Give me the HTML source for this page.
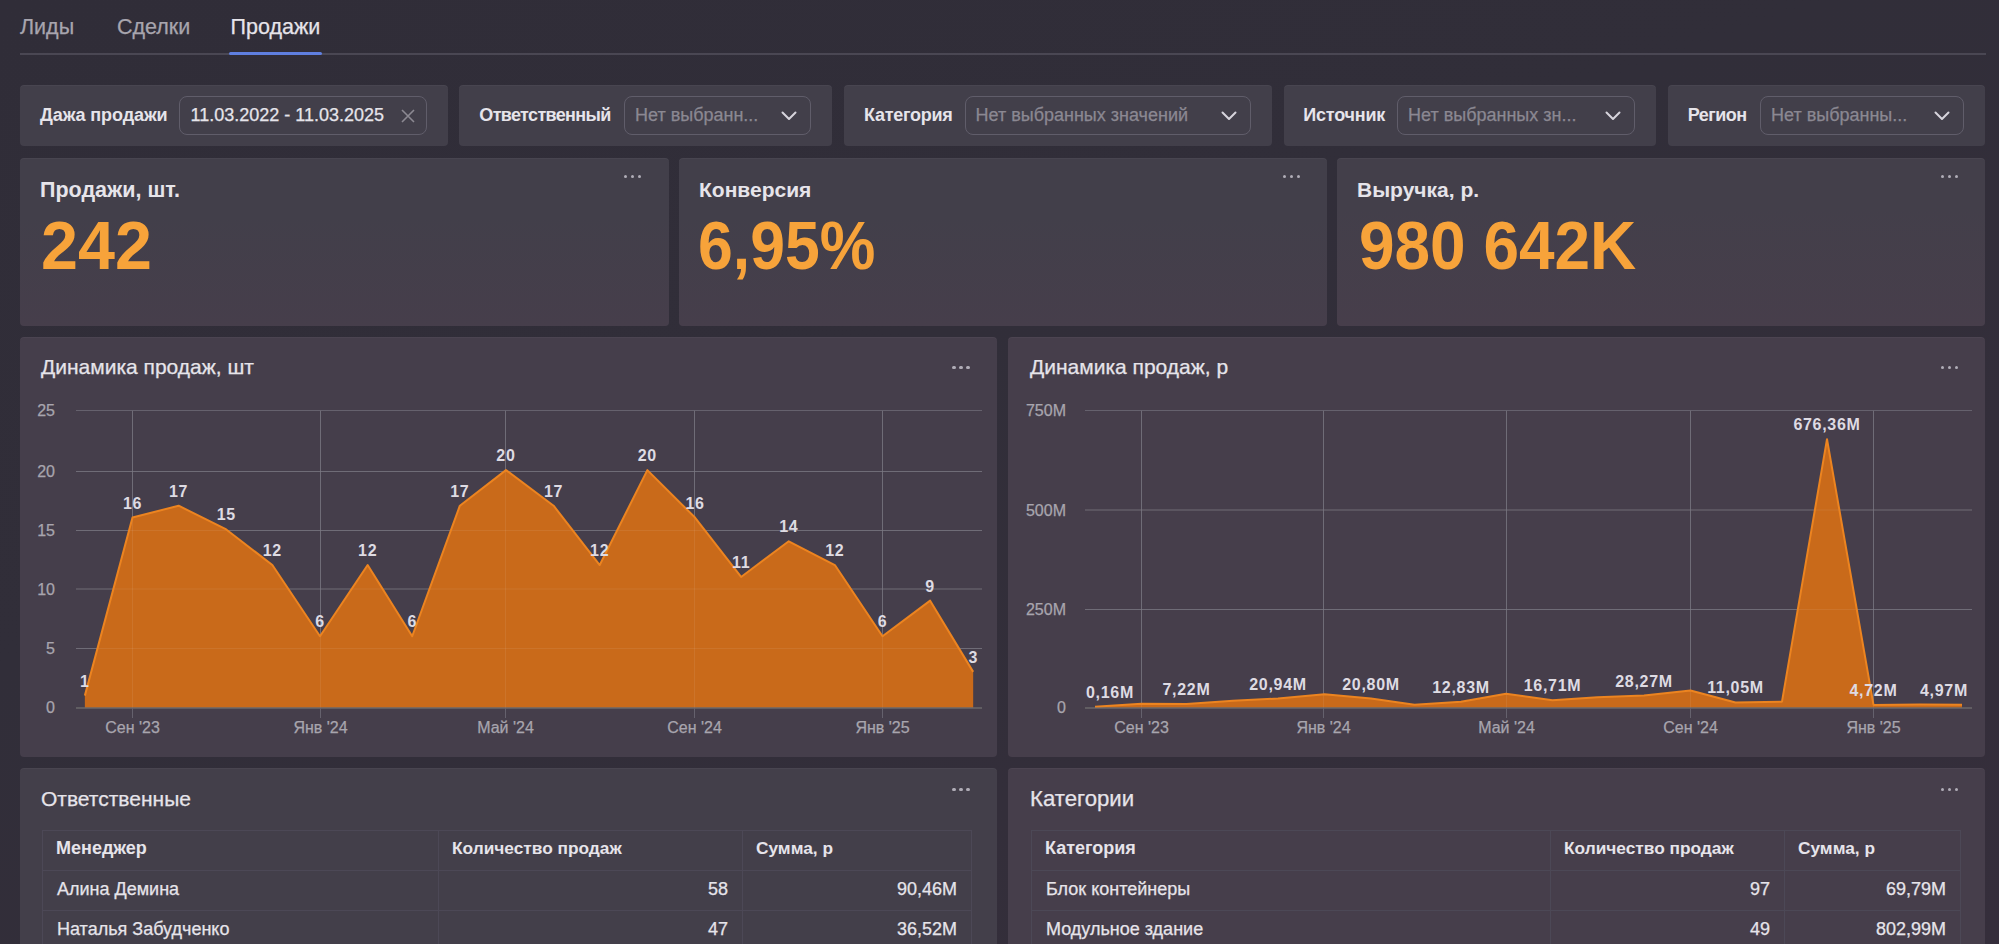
<!DOCTYPE html>
<html><head><meta charset="utf-8">
<style>
*{margin:0;padding:0;box-sizing:border-box}
html,body{width:1999px;height:944px;overflow:hidden;background:#312e39;}
body{background:linear-gradient(160deg,#302d38 0%,#312e39 40%,#352e3b 100%);font-family:"Liberation Sans",sans-serif;color:#e6e4ea}
body div,body td{-webkit-text-stroke:0.25px currentColor}
.flab,.kt,.kv{-webkit-text-stroke:0 !important}
.abs,.card,.flab,.inp,.fval,.fph,.dots,.t,.kv{position:absolute}
.card{background:#423f4a;border-radius:4px;box-shadow:inset 0 1px 0 rgba(255,255,255,0.035)}
.tab{position:absolute;top:13.5px;font-size:21.5px;line-height:26px;color:#a8a5ae}
.tab.on{color:#e6e4ea}
.flab{font-size:17.5px;font-weight:700;line-height:24px;color:#e6e4ea;white-space:nowrap}
.inp{border:1.5px solid #605d6a;border-radius:8px}
.fval{font-size:18px;line-height:24px;color:#e6e4ea;white-space:nowrap}
.fph{font-size:18px;line-height:24px;color:#8b8892;white-space:nowrap}
.dots{width:20px;height:6px}
.dots i{position:absolute;top:0.1px;width:3.8px;height:3.8px;border-radius:50%;background:#b0adb7}
.dots i:nth-child(1){left:0} .dots i:nth-child(2){left:7px} .dots i:nth-child(3){left:14px}
.t{white-space:nowrap}
.kt{font-size:21px;font-weight:700;line-height:26px}
.kv{font-size:68px;font-weight:700;line-height:80px;color:#f7a33a;white-space:nowrap;transform-origin:0 0}
.ct{font-size:21px;line-height:26px}
svg.ch{position:absolute;left:0;top:0}
.g{stroke:#65616d;stroke-width:1}
.af{fill:#c96a1a}
.al{fill:none;stroke:#ec8420;stroke-width:2;stroke-linejoin:round}
.ax{stroke:#7d7c7a;stroke-width:1}
.go{stroke:#ffffff;stroke-opacity:0.07;stroke-width:1}
.yl{font-family:"Liberation Sans";font-size:16px;fill:#a8a5ae;stroke:#a8a5ae;stroke-width:0.25px}
.xl{font-family:"Liberation Sans";font-size:16px;fill:#a8a5ae;stroke:#a8a5ae;stroke-width:0.25px}
.dl{font-family:"Liberation Sans";font-size:16px;font-weight:700;fill:#dedbe3;letter-spacing:0.7px}
table.tb{position:absolute;border-collapse:collapse;font-size:18px}
.tb td,.tb th{border:1px solid #4c4856;height:40px;padding:0 14px;white-space:nowrap}
.tb th{font-weight:700;font-size:18px;text-align:left;padding-bottom:4px;padding-left:13px}
.tb td{padding-bottom:2px}
.tb td.n{text-align:right}
</style></head><body>
<div class="tab" style="left:20px">Лиды</div>
<div class="tab" style="left:117px">Сделки</div>
<div class="tab on" style="left:230.5px">Продажи</div>
<div class="abs" style="left:20px;top:53px;width:1966px;height:1.5px;background:#4a4753"></div>
<div class="abs" style="left:229px;top:51.5px;width:93px;height:3px;background:#5f7fe0;border-radius:2px"></div>
<div class="card" style="left:20px;top:85px;width:428px;height:61px"></div>
<div class="flab" style="left:40px;top:103px;font-size:18px;letter-spacing:-0.1px">Дажа продажи</div>
<div class="inp" style="left:179px;top:96px;width:248px;height:38.5px"></div>
<div class="fval" style="left:190.6px;top:103px">11.03.2022 - 11.03.2025</div>
<svg style="position:absolute;left:401px;top:109px" width="14" height="14" viewBox="0 0 14 14"><path d="M1 1L13 13M13 1L1 13" stroke="#8c8992" stroke-width="1.6"/></svg>
<div class="card" style="left:459px;top:85px;width:373px;height:61px"></div>
<div class="flab" style="left:479.3px;top:103px;font-size:18px;letter-spacing:-0.65px">Ответственный</div>
<div class="inp" style="left:624px;top:96px;width:187px;height:38.5px"></div>
<div class="fph" style="left:635px;top:103px">Нет выбранн...</div>
<div style="position:absolute;left:781px;top:111px"><svg style="display:block" class="chev" width="16" height="10" viewBox="0 0 16 10"><path d="M1.5 1.5 L8 8 L14.5 1.5" fill="none" stroke="#d6d4dc" stroke-width="2" stroke-linecap="round" stroke-linejoin="round"/></svg></div>
<div class="card" style="left:844px;top:85px;width:427.5px;height:61px"></div>
<div class="flab" style="left:864px;top:103px;font-size:18px;letter-spacing:-0.25px">Категория</div>
<div class="inp" style="left:964.5px;top:96px;width:286.0px;height:38.5px"></div>
<div class="fph" style="left:975.5px;top:103px">Нет выбранных значений</div>
<div style="position:absolute;left:1220.5px;top:111px"><svg style="display:block" class="chev" width="16" height="10" viewBox="0 0 16 10"><path d="M1.5 1.5 L8 8 L14.5 1.5" fill="none" stroke="#d6d4dc" stroke-width="2" stroke-linecap="round" stroke-linejoin="round"/></svg></div>
<div class="card" style="left:1283.5px;top:85px;width:372.0px;height:61px"></div>
<div class="flab" style="left:1303.3px;top:103px;font-size:18px;letter-spacing:-0.2px">Источник</div>
<div class="inp" style="left:1397px;top:96px;width:237.5px;height:38.5px"></div>
<div class="fph" style="left:1408px;top:103px">Нет выбранных зн...</div>
<div style="position:absolute;left:1604.5px;top:111px"><svg style="display:block" class="chev" width="16" height="10" viewBox="0 0 16 10"><path d="M1.5 1.5 L8 8 L14.5 1.5" fill="none" stroke="#d6d4dc" stroke-width="2" stroke-linecap="round" stroke-linejoin="round"/></svg></div>
<div class="card" style="left:1667.5px;top:85px;width:317.5px;height:61px"></div>
<div class="flab" style="left:1687.7px;top:103px;font-size:18px;letter-spacing:-0.5px">Регион</div>
<div class="inp" style="left:1760px;top:96px;width:203.5px;height:38.5px"></div>
<div class="fph" style="left:1771px;top:103px">Нет выбранны...</div>
<div style="position:absolute;left:1933.5px;top:111px"><svg style="display:block" class="chev" width="16" height="10" viewBox="0 0 16 10"><path d="M1.5 1.5 L8 8 L14.5 1.5" fill="none" stroke="#d6d4dc" stroke-width="2" stroke-linecap="round" stroke-linejoin="round"/></svg></div>
<div class="card" style="left:20px;top:158px;width:648.5px;height:168px;background:linear-gradient(#423f4a 35%,#463e4b)"></div>
<div class="card" style="left:679px;top:158px;width:648px;height:168px;background:linear-gradient(#423f4a 35%,#463e4b)"></div>
<div class="card" style="left:1337px;top:158px;width:648px;height:168px;background:linear-gradient(#433f4a 30%,#473e4b)"></div>
<div class="t kt" style="left:40px;top:176.5px;font-size:21.5px">Продажи, шт.</div>
<div class="t kt" style="left:699px;top:177px">Конверсия</div>
<div class="t kt" style="left:1357px;top:177px">Выручка, р.</div>
<div class="kv" style="left:40.5px;top:205px;transform:scaleX(0.978)">242</div>
<div class="kv" style="left:698px;top:205px;transform:scaleX(0.92)">6,95%</div>
<div class="kv" style="left:1358.5px;top:205px;transform:scaleX(0.94)">980 642K</div>
<div class="dots" style="left:623.5px;top:174.5px"><i></i><i></i><i></i></div><div class="dots" style="left:1282.5px;top:174.5px"><i></i><i></i><i></i></div><div class="dots" style="left:1940.5px;top:174.5px"><i></i><i></i><i></i></div>
<div class="card" style="left:20px;top:337px;width:976.5px;height:420px;background:#453e4b"></div>
<div class="card" style="left:1008px;top:337px;width:977px;height:420px;background:#463e4b"></div>
<div class="t ct" style="left:41px;top:354px">Динамика продаж, шт</div>
<div class="t ct" style="left:1030px;top:354px">Динамика продаж, р</div>
<div class="dots" style="left:952px;top:365.5px"><i></i><i></i><i></i></div><div class="dots" style="left:1940.5px;top:365.5px"><i></i><i></i><i></i></div>
<svg class="ch" width="1999" height="944" viewBox="0 0 1999 944">
<line x1="76" y1="410.5" x2="982" y2="410.5" class="g"/>
<line x1="76" y1="471.5" x2="982" y2="471.5" class="g"/>
<line x1="76" y1="530.5" x2="982" y2="530.5" class="g"/>
<line x1="76" y1="589" x2="982" y2="589" class="g"/>
<line x1="76" y1="648.5" x2="982" y2="648.5" class="g"/>
<line x1="132.5" y1="410.5" x2="132.5" y2="707.5" class="g"/>
<line x1="320.5" y1="410.5" x2="320.5" y2="707.5" class="g"/>
<line x1="505.5" y1="410.5" x2="505.5" y2="707.5" class="g"/>
<line x1="694.5" y1="410.5" x2="694.5" y2="707.5" class="g"/>
<line x1="882.5" y1="410.5" x2="882.5" y2="707.5" class="g"/>
<path d="M84.86 707.50 L84.86 695.63 L132.50 517.58 L178.61 505.71 L226.25 529.45 L272.36 565.06 L320.00 636.28 L367.65 565.06 L412.22 636.28 L459.86 505.71 L505.97 470.10 L553.61 505.71 L599.72 565.06 L647.36 470.10 L695.01 517.58 L741.11 576.93 L788.76 541.32 L834.86 565.06 L882.51 636.28 L930.15 600.67 L973.18 671.89 L973.18 707.50 Z" class="af"/>
<line x1="76" y1="471.5" x2="982" y2="471.5" class="go"/>
<line x1="76" y1="530.5" x2="982" y2="530.5" class="go"/>
<line x1="76" y1="589" x2="982" y2="589" class="go"/>
<line x1="76" y1="648.5" x2="982" y2="648.5" class="go"/>
<line x1="132.5" y1="410.5" x2="132.5" y2="707.5" class="go"/>
<line x1="320.5" y1="410.5" x2="320.5" y2="707.5" class="go"/>
<line x1="505.5" y1="410.5" x2="505.5" y2="707.5" class="go"/>
<line x1="694.5" y1="410.5" x2="694.5" y2="707.5" class="go"/>
<line x1="882.5" y1="410.5" x2="882.5" y2="707.5" class="go"/>
<path d="M84.86 695.63 L132.50 517.58 L178.61 505.71 L226.25 529.45 L272.36 565.06 L320.00 636.28 L367.65 565.06 L412.22 636.28 L459.86 505.71 L505.97 470.10 L553.61 505.71 L599.72 565.06 L647.36 470.10 L695.01 517.58 L741.11 576.93 L788.76 541.32 L834.86 565.06 L882.51 636.28 L930.15 600.67 L973.18 671.89" class="al"/>
<line x1="76" y1="708" x2="982" y2="708" class="ax"/>
<line x1="132.5" y1="708" x2="132.5" y2="718" class="g"/>
<line x1="320.5" y1="708" x2="320.5" y2="718" class="g"/>
<line x1="505.5" y1="708" x2="505.5" y2="718" class="g"/>
<line x1="694.5" y1="708" x2="694.5" y2="718" class="g"/>
<line x1="882.5" y1="708" x2="882.5" y2="718" class="g"/>
<text x="55" y="416.0" class="yl" text-anchor="end">25</text>
<text x="55" y="477.0" class="yl" text-anchor="end">20</text>
<text x="55" y="536.0" class="yl" text-anchor="end">15</text>
<text x="55" y="594.5" class="yl" text-anchor="end">10</text>
<text x="55" y="654.0" class="yl" text-anchor="end">5</text>
<text x="55" y="713.0" class="yl" text-anchor="end">0</text>
<text x="132.5" y="733" class="xl" text-anchor="middle">Сен '23</text>
<text x="320.5" y="733" class="xl" text-anchor="middle">Янв '24</text>
<text x="505.5" y="733" class="xl" text-anchor="middle">Май '24</text>
<text x="694.5" y="733" class="xl" text-anchor="middle">Сен '24</text>
<text x="882.5" y="733" class="xl" text-anchor="middle">Янв '25</text>
<text x="84.86" y="686.63" class="dl" text-anchor="middle">1</text>
<text x="132.50" y="508.58" class="dl" text-anchor="middle">16</text>
<text x="178.61" y="496.71" class="dl" text-anchor="middle">17</text>
<text x="226.25" y="520.45" class="dl" text-anchor="middle">15</text>
<text x="272.36" y="556.06" class="dl" text-anchor="middle">12</text>
<text x="320.00" y="627.28" class="dl" text-anchor="middle">6</text>
<text x="367.65" y="556.06" class="dl" text-anchor="middle">12</text>
<text x="412.22" y="627.28" class="dl" text-anchor="middle">6</text>
<text x="459.86" y="496.71" class="dl" text-anchor="middle">17</text>
<text x="505.97" y="461.10" class="dl" text-anchor="middle">20</text>
<text x="553.61" y="496.71" class="dl" text-anchor="middle">17</text>
<text x="599.72" y="556.06" class="dl" text-anchor="middle">12</text>
<text x="647.36" y="461.10" class="dl" text-anchor="middle">20</text>
<text x="695.01" y="508.58" class="dl" text-anchor="middle">16</text>
<text x="741.11" y="567.93" class="dl" text-anchor="middle">11</text>
<text x="788.76" y="532.32" class="dl" text-anchor="middle">14</text>
<text x="834.86" y="556.06" class="dl" text-anchor="middle">12</text>
<text x="882.51" y="627.28" class="dl" text-anchor="middle">6</text>
<text x="930.15" y="591.67" class="dl" text-anchor="middle">9</text>
<text x="973.18" y="662.89" class="dl" text-anchor="middle">3</text>
<line x1="1085" y1="410.5" x2="1972" y2="410.5" class="g"/>
<line x1="1085" y1="510" x2="1972" y2="510" class="g"/>
<line x1="1085" y1="609.5" x2="1972" y2="609.5" class="g"/>
<line x1="1141.5" y1="410.5" x2="1141.5" y2="707.5" class="g"/>
<line x1="1323.5" y1="410.5" x2="1323.5" y2="707.5" class="g"/>
<line x1="1506.5" y1="410.5" x2="1506.5" y2="707.5" class="g"/>
<line x1="1690.5" y1="410.5" x2="1690.5" y2="707.5" class="g"/>
<line x1="1873.5" y1="410.5" x2="1873.5" y2="707.5" class="g"/>
<path d="M1095.00 707.50 L1095.00 706.74 L1141.50 703.63 L1186.50 703.94 L1233.00 700.87 L1278.00 698.51 L1324.50 694.14 L1371.00 698.57 L1414.50 704.82 L1461.00 701.72 L1506.00 693.74 L1552.50 700.19 L1597.50 697.30 L1644.00 695.61 L1690.50 690.58 L1735.50 702.43 L1782.00 701.66 L1827.00 439.19 L1873.50 704.93 L1920.00 704.62 L1962.00 704.83 L1962.00 707.50 Z" class="af"/>
<line x1="1085" y1="510" x2="1972" y2="510" class="go"/>
<line x1="1085" y1="609.5" x2="1972" y2="609.5" class="go"/>
<line x1="1141.5" y1="410.5" x2="1141.5" y2="707.5" class="go"/>
<line x1="1323.5" y1="410.5" x2="1323.5" y2="707.5" class="go"/>
<line x1="1506.5" y1="410.5" x2="1506.5" y2="707.5" class="go"/>
<line x1="1690.5" y1="410.5" x2="1690.5" y2="707.5" class="go"/>
<line x1="1873.5" y1="410.5" x2="1873.5" y2="707.5" class="go"/>
<path d="M1095.00 706.74 L1141.50 703.63 L1186.50 703.94 L1233.00 700.87 L1278.00 698.51 L1324.50 694.14 L1371.00 698.57 L1414.50 704.82 L1461.00 701.72 L1506.00 693.74 L1552.50 700.19 L1597.50 697.30 L1644.00 695.61 L1690.50 690.58 L1735.50 702.43 L1782.00 701.66 L1827.00 439.19 L1873.50 704.93 L1920.00 704.62 L1962.00 704.83" class="al"/>
<line x1="1085" y1="708" x2="1972" y2="708" class="ax"/>
<line x1="1141.5" y1="708" x2="1141.5" y2="718" class="g"/>
<line x1="1323.5" y1="708" x2="1323.5" y2="718" class="g"/>
<line x1="1506.5" y1="708" x2="1506.5" y2="718" class="g"/>
<line x1="1690.5" y1="708" x2="1690.5" y2="718" class="g"/>
<line x1="1873.5" y1="708" x2="1873.5" y2="718" class="g"/>
<text x="1066" y="416.0" class="yl" text-anchor="end">750M</text>
<text x="1066" y="515.5" class="yl" text-anchor="end">500M</text>
<text x="1066" y="615.0" class="yl" text-anchor="end">250M</text>
<text x="1066" y="713.0" class="yl" text-anchor="end">0</text>
<text x="1141.5" y="733" class="xl" text-anchor="middle">Сен '23</text>
<text x="1323.5" y="733" class="xl" text-anchor="middle">Янв '24</text>
<text x="1506.5" y="733" class="xl" text-anchor="middle">Май '24</text>
<text x="1690.5" y="733" class="xl" text-anchor="middle">Сен '24</text>
<text x="1873.5" y="733" class="xl" text-anchor="middle">Янв '25</text>
<text x="1110.00" y="697.74" class="dl" text-anchor="middle">0,16M</text>
<text x="1186.50" y="694.94" class="dl" text-anchor="middle">7,22M</text>
<text x="1278.00" y="689.51" class="dl" text-anchor="middle">20,94M</text>
<text x="1371.00" y="689.57" class="dl" text-anchor="middle">20,80M</text>
<text x="1461.00" y="692.72" class="dl" text-anchor="middle">12,83M</text>
<text x="1552.50" y="691.19" class="dl" text-anchor="middle">16,71M</text>
<text x="1644.00" y="686.61" class="dl" text-anchor="middle">28,27M</text>
<text x="1735.50" y="693.43" class="dl" text-anchor="middle">11,05M</text>
<text x="1827.00" y="430.19" class="dl" text-anchor="middle">676,36M</text>
<text x="1873.50" y="695.93" class="dl" text-anchor="middle">4,72M</text>
<text x="1944.00" y="695.83" class="dl" text-anchor="middle">4,97M</text>
</svg>
<div class="card" style="left:20px;top:768px;width:976.5px;height:200px;background:#433f4a"></div>
<div class="card" style="left:1008px;top:768px;width:977px;height:200px;background:#463e4b"></div>
<div class="t ct" style="left:41px;top:786px">Ответственные</div>
<div class="t ct" style="left:1030px;top:786px;font-size:22.2px">Категории</div>
<div class="dots" style="left:952px;top:787.5px"><i></i><i></i><i></i></div><div class="dots" style="left:1940.5px;top:787.5px"><i></i><i></i><i></i></div>
<table class="tb" style="left:42px;top:830px;width:930px">
<tr><th style="width:396px">Менеджер</th><th style="width:304px;font-size:17.3px">Количество продаж</th><th style="font-size:17.3px">Сумма, р</th></tr>
<tr><td>Алина Демина</td><td class="n">58</td><td class="n">90,46M</td></tr>
<tr><td>Наталья Забудченко</td><td class="n">47</td><td class="n">36,52M</td></tr>
</table>
<table class="tb" style="left:1031px;top:830px;width:930px">
<tr><th style="width:519px">Категория</th><th style="width:234px;font-size:17.3px">Количество продаж</th><th style="font-size:17.3px">Сумма, р</th></tr>
<tr><td>Блок контейнеры</td><td class="n">97</td><td class="n">69,79M</td></tr>
<tr><td>Модульное здание</td><td class="n">49</td><td class="n">802,99M</td></tr>
</table>
</body></html>
